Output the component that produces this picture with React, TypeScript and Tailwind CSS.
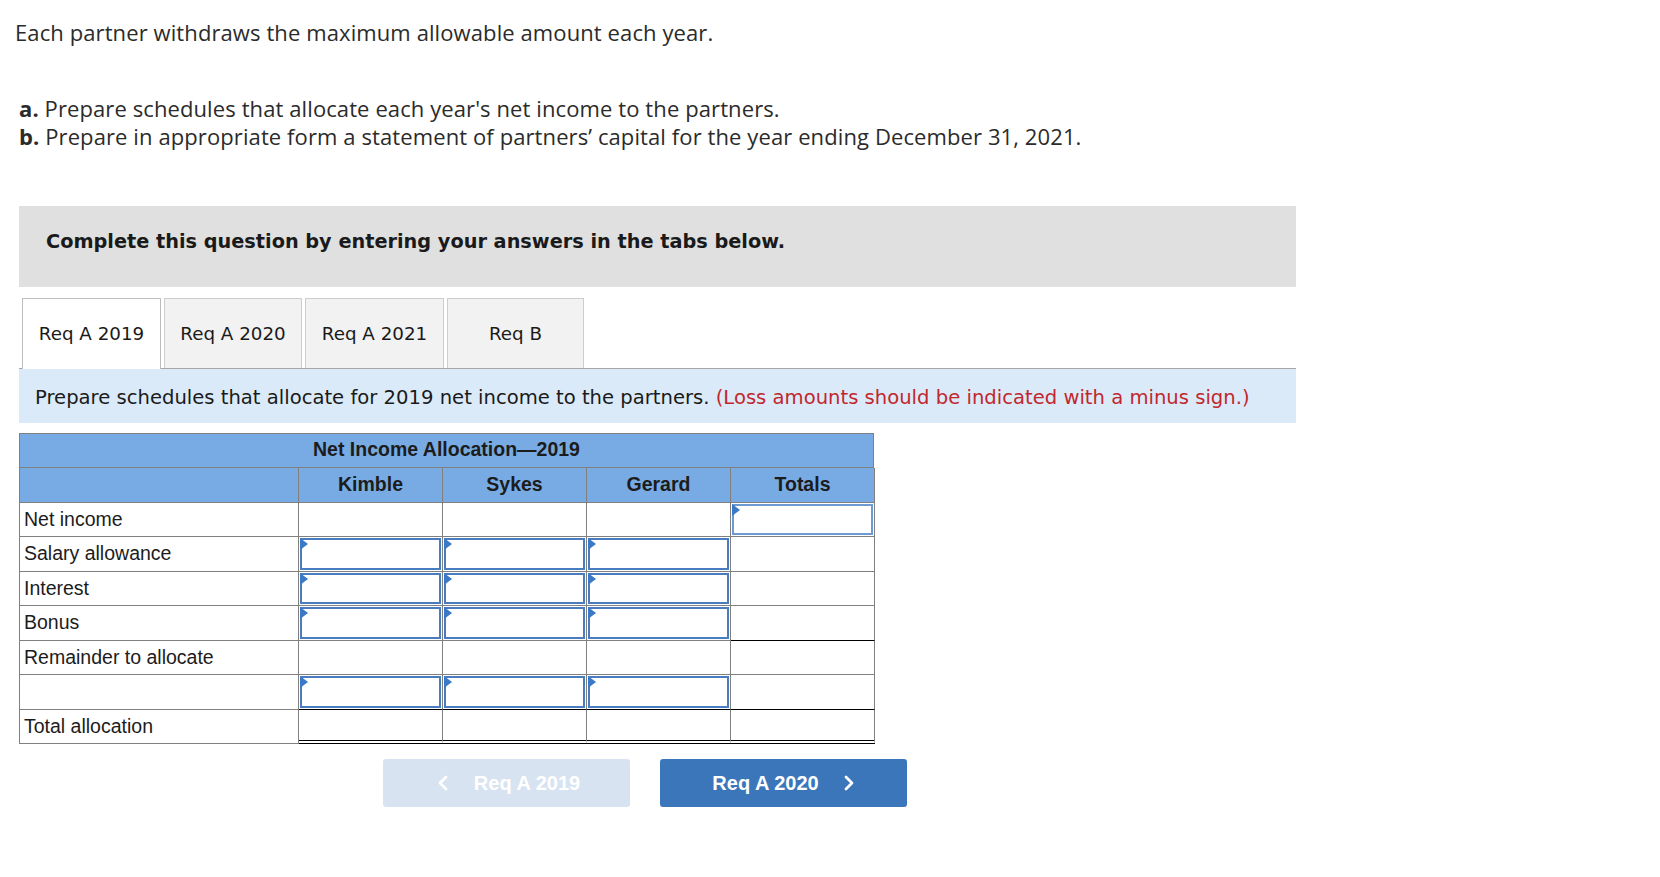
import { ChevronLeft, ChevronRight } from 'lucide-react'

const rows = [
  { label: 'Net income', inputs: [false, false, false, true] },
  { label: 'Salary allowance', inputs: [true, true, true, false] },
  { label: 'Interest', inputs: [true, true, true, false] },
  { label: 'Bonus', inputs: [true, true, true, false], totalBlack: true },
  { label: 'Remainder to allocate', inputs: [false, false, false, false] },
  { label: '', inputs: [true, true, true, false], numBlack: true },
]

function InputBox({ light }: { light?: boolean }) {
  return (
    <div className="absolute inset-[1px]">
      <div className={`h-full w-full border-2 bg-white ${light ? 'border-[#6d9ad3]' : 'border-[#4a7cc0]'}`} />
      <svg className="absolute left-0 top-0" width="8" height="12" viewBox="0 0 8 12">
        <polygon points="0,0 8,6 0,12" fill="#3b78c6" />
      </svg>
    </div>
  )
}

export default function App() {
  return (
    <div className="min-h-[877px] bg-white text-[#2b2b2b]">
      {/* intro text */}
      <div className="font-['Open_Sans',sans-serif] text-[22px] leading-[28px] tracking-[0.1px]">
        <p className="pl-[15px] pt-[18px]">Each partner withdraws the maximum allowable amount each year.</p>
        <div className="mt-[49px] pl-[19px] leading-[27.5px]">
          <p><span className="font-bold">a.</span> Prepare schedules that allocate each year's net income to the partners.</p>
          <p><span className="font-bold">b.</span> Prepare in appropriate form a statement of partners’ capital for the year ending December 31, 2021.</p>
        </div>
      </div>

      <div className="ml-[19px] mt-[56px] w-[1277px] font-['DejaVu_Sans',sans-serif]">
        {/* instructions box */}
        <div className="h-[81px] bg-[#e0e0e0] pl-[27px] pt-[23px] text-[19.3px] leading-[26px] font-bold text-[#1a1a1a]">
          Complete this question by entering your answers in the tabs below.
        </div>

        {/* tabs */}
        <div className="relative z-10 mt-[11px] flex gap-[3px] pl-[3px] text-[18.3px] text-[#1a1a1a]">
          <div className="-mb-px flex h-[71px] w-[139px] items-center justify-center border border-b-0 border-[#bdbdbd] bg-white">Req A 2019</div>
          <div className="flex h-[70px] w-[138px] items-center justify-center border border-b-0 border-[#cdcdcd] bg-[#f2f2f2]">Req A 2020</div>
          <div className="flex h-[70px] w-[139px] items-center justify-center border border-b-0 border-[#cdcdcd] bg-[#f2f2f2]">Req A 2021</div>
          <div className="flex h-[70px] w-[137px] items-center justify-center border border-b-0 border-[#cdcdcd] bg-[#f2f2f2]">Req B</div>
        </div>

        {/* prompt strip */}
        <div className="flex h-[55px] items-center border-t border-[#a6a6a6] bg-[#dbeaf8] pl-[16px] pt-[4px] text-[19.6px] text-[#1a1a1a]">
          Prepare schedules that allocate for 2019 net income to the partners.&nbsp;
          <span className="text-[#c1272d]">(Loss amounts should be indicated with a minus sign.)</span>
        </div>

        {/* allocation table */}
        <div className="mt-[9.5px] w-[855px] font-['Liberation_Sans',Arial,sans-serif] text-[19.5px] text-[#1c1c1c]">
          <div className="flex h-[34px] items-center justify-center border border-b-0 border-[#808080] bg-[#78abe3] font-bold">
            Net Income Allocation—2019
          </div>
          <div className="grid grid-cols-[279px_144px_144px_144px_144px] border-l border-t border-[#808080]">
            <div className="h-[35px] border-b border-r border-[#808080] bg-[#78abe3]" />
            {['Kimble', 'Sykes', 'Gerard', 'Totals'].map((h) => (
              <div key={h} className="flex h-[35px] items-center justify-center border-b border-r border-[#808080] bg-[#78abe3] font-bold">
                {h}
              </div>
            ))}

            {rows.map((r, ri) => (
              <div key={ri} className="contents">
                <div className="flex h-[34.5px] items-center border-b border-r border-[#808080] pl-[4px]">{r.label}</div>
                {r.inputs.map((inp, ci) => (
                  <div
                    key={ci}
                    className={`relative h-[34.5px] border-b border-r border-[#808080] ${
                      (r.totalBlack && ci === 3) || r.numBlack ? 'border-b-black' : ''
                    }`}
                  >
                    {inp && <InputBox light={ri === 0} />}
                  </div>
                ))}
              </div>
            ))}

            <div className="flex h-[34.5px] items-center border-b border-r border-[#808080] pl-[4px]">Total allocation</div>
            {[0, 1, 2, 3].map((c) => (
              <div key={c} className="h-[34.5px] border-b-[4px] border-r border-b-black border-double border-r-[#808080]" />
            ))}
          </div>
        </div>

        {/* navigation */}
        <div className="ml-[364px] mt-[14.5px] flex gap-[30px] font-['Liberation_Sans',Arial,sans-serif] text-[20px] font-bold text-white">
          <div className="flex h-[48px] w-[247px] items-center justify-center gap-[19px] rounded-[3px] bg-[#d7e3f1] pr-[2px]">
            <ChevronLeft size={24} strokeWidth={2.75} />
            <span>Req A 2019</span>
          </div>
          <div className="flex h-[48px] w-[247px] items-center justify-center gap-[18px] rounded-[3px] bg-[#3b76bb] pl-[6px]">
            <span>Req A 2020</span>
            <ChevronRight size={24} strokeWidth={2.75} />
          </div>
        </div>
      </div>
    </div>
  )
}
